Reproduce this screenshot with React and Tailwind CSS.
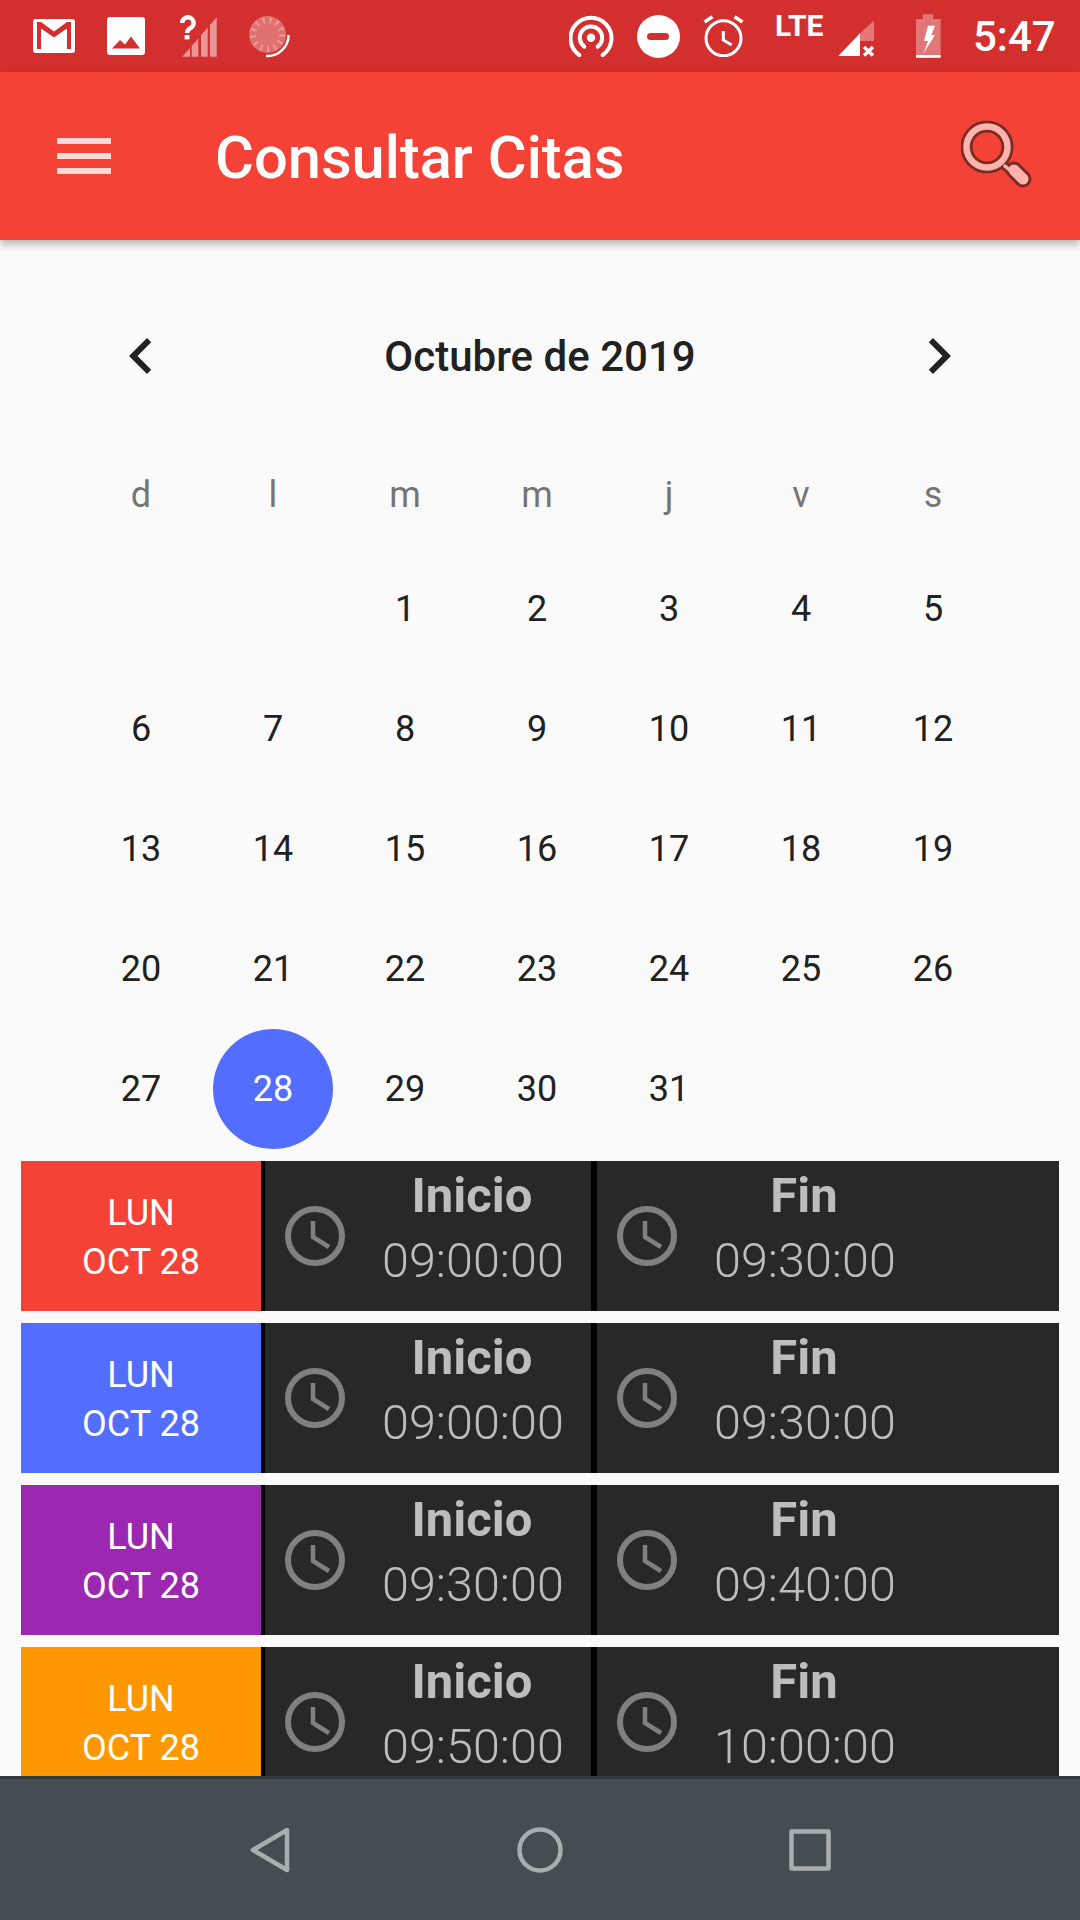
import React from 'react';

const weekDays = ['d', 'l', 'm', 'm', 'j', 'v', 's'];
const days = ['', '', 1, 2, 3, 4, 5, 6, 7, 8, 9, 10, 11, 12, 13, 14, 15, 16, 17, 18, 19, 20, 21, 22, 23, 24, 25, 26, 27, 28, 29, 30, 31];

const citas = [
  { color: 'bg-[#f44336]', inicio: '09:00:00', fin: '09:30:00' },
  { color: 'bg-[#536dfe]', inicio: '09:00:00', fin: '09:30:00' },
  { color: 'bg-[#9c27b0]', inicio: '09:30:00', fin: '09:40:00' },
  { color: 'bg-[#ff9800]', inicio: '09:50:00', fin: '10:00:00' },
];

const StatusLeft = () => (
  <div className="flex items-center pl-[33px]">
    {/* Gmail */}
    <svg width="42" height="34" viewBox="0 0 42 34">
      <rect width="42" height="34" rx="3" fill="#fff" />
      <path d="M4 3H8L21 12.5L34 3H38V30H34V9.5L21 18.5L8 9.5V30H4Z" fill="#d32f2f" />
    </svg>
    {/* Picture */}
    <svg width="38" height="38" viewBox="0 0 38 38" className="ml-[32px]">
      <rect width="38" height="38" rx="3" fill="#fff" />
      <path d="M5 31.5L13 23L18 27.5L24 19.5L33 31.5Z" fill="#d32f2f" />
    </svg>
    {/* No sim signal */}
    <svg width="37" height="42" viewBox="0 0 37 42" className="ml-[35px]">
      <path d="M2.3 41.7L10 32.9V41.7ZM11.7 31L18.3 23.4V41.7H11.7ZM21 20.3L27.7 12.6V41.7H21ZM30 10L36.7 2.3V41.7H30Z" fill="#fff" fillOpacity="0.5" />
      <path d="M2.2 8a5.7 5.7 0 1 1 9 4.6c-2 1.4-4.2 2-4.2 5.4" fill="none" stroke="#fff" strokeWidth="4.4" />
      <rect x="4.6" y="20" width="4.8" height="4.4" fill="#fff" />
    </svg>
    {/* Sync spinner */}
    <svg width="43" height="44" viewBox="0 0 43 44" className="ml-[32px]">
      <circle cx="18.5" cy="20.5" r="18.5" fill="#fff" fillOpacity="0.32" />
      <circle cx="18.5" cy="20.5" r="14.5" fill="none" stroke="#fff" strokeOpacity="0.3" strokeWidth="6" strokeDasharray="2 5" />
      <path d="M39.5 21A21 21 0 0 1 17 42" fill="none" stroke="#fff" strokeWidth="2.5" />
    </svg>
  </div>
);

const StatusRight = () => (
  <div className="flex items-center pr-[28px]">
    {/* Hotspot */}
    <svg width="46" height="44" viewBox="0 0 46 44" fill="none" stroke="#fff" strokeLinecap="round" className="mt-[2px]">
      <path d="M10.3 40A20.5 20.5 0 1 1 33.7 40" strokeWidth="4" />
      <path d="M15.3 31.7A11.2 11.2 0 1 1 28.7 31.7" strokeWidth="4" />
      <circle cx="22" cy="22.7" r="4.2" fill="#fff" stroke="none" />
    </svg>
    {/* Do not disturb */}
    <svg width="43" height="43" viewBox="0 0 43 43" className="ml-[22px]">
      <circle cx="21.5" cy="21.5" r="21.5" fill="#fff" />
      <rect x="10" y="18" width="22" height="7" rx="3.5" fill="#d32f2f" />
    </svg>
    {/* Alarm */}
    <svg width="41" height="42" viewBox="0 0 41 42" fill="none" stroke="#fff" className="ml-[23px]">
      <circle cx="20.5" cy="23.3" r="17.5" strokeWidth="3" />
      <path d="M1.5 7L9.5 1.7M31.5 1.7L39.5 7" strokeWidth="3.5" />
      <path d="M20.3 16V25L28.7 30" strokeWidth="3" />
    </svg>
    <span className="ml-[31px] mb-[21px] w-[48px] text-[30px] leading-[30px] font-bold text-white">LTE</span>
    {/* Signal */}
    <svg width="37" height="37" viewBox="0 0 37 37" className="ml-[15px] mt-[5px]">
      <path d="M22 13.3L36 0.7V21H22Z" fill="#fff" fillOpacity="0.35" />
      <path d="M0.3 36L22 13.3V36Z" fill="#fff" />
      <path d="M26 27L35 35.5M35 27L26 35.5" stroke="#fff" strokeWidth="3.5" />
    </svg>
    {/* Battery */}
    <svg width="25" height="44" viewBox="0 0 25 44" className="ml-[41px]">
      <path d="M6.7 0.3H17.3V5H24.7V41H0V5H6.7Z" fill="#fff" fillOpacity="0.35" />
      <rect y="41" width="24.7" height="2.8" fill="#fff" />
      <path d="M12 11.7H19L15.3 21H19L7.5 39.3L12 27H8Z" fill="#fff" />
    </svg>
    <span className="ml-[32px] mt-[2px] w-[79px] text-[42px] leading-[44px] font-medium text-white">5:47</span>
  </div>
);

const AppBar = () => (
  <header className="relative z-10 flex h-[168px] items-center bg-[#f44336] pl-[48px] pr-[47px] shadow-[0_4px_8px_rgba(0,0,0,0.3)]">
    <svg width="72" height="72" viewBox="0 0 24 24" fill="#ffd9d6">
      <path d="M3 18h18v-2H3v2zm0-5h18v-2H3v2zm0-7v2h18V6H3z" />
    </svg>
    <h1 className="ml-[95px] mt-[3px] flex-1 text-[59.6px] leading-[70px] font-medium text-white">Consultar Citas</h1>
    <svg width="72" height="72" viewBox="0 0 72 72" fill="none" strokeLinecap="round">
      <path d="M44 46L52 53" stroke="#7a2b25" strokeWidth="9" />
      <path d="M53 50L62 59" stroke="#7a2b25" strokeWidth="17" />
      <circle cx="26" cy="27" r="20.5" stroke="#7a2b25" strokeWidth="12" />
      <circle cx="26" cy="27" r="20.5" stroke="#ffb3ad" strokeWidth="6.5" />
      <path d="M44 46L52 53" stroke="#ffb3ad" strokeWidth="3.5" />
      <path d="M53 50L62 59" stroke="#ffb3ad" strokeWidth="11" />
    </svg>
  </header>
);

const Calendar = () => (
  <section className="pt-[80px]">
    <div className="flex h-[72px] items-center justify-between px-[105px]">
      <svg width="72" height="72" viewBox="0 0 24 24" fill="#212121">
        <path d="M15.41 7.41L14 6l-6 6 6 6 1.41-1.41L10.83 12z" />
      </svg>
      <span className="mt-[2px] text-[42px] leading-[50px] font-medium text-[#212121]">Octubre de 2019</span>
      <svg width="72" height="72" viewBox="0 0 24 24" fill="#212121">
        <path d="M10 6L8.59 7.41 13.17 12l-4.58 4.59L10 18l6-6z" />
      </svg>
    </div>

    <div className="mt-[67px] grid h-[72px] grid-cols-7 items-center pl-[75px] pr-[81px]">
      {weekDays.map((d, i) => (
        <span key={i} className="text-center text-[36px] leading-[44px] text-[#757575]">{d}</span>
      ))}
    </div>

    <div className="mt-[18px] grid grid-cols-7 auto-rows-[120px] pl-[75px] pr-[81px]">
      {days.map((d, i) => (
        <div key={i} className="flex items-center justify-center">
          <span
            className={
              d === 28
                ? 'flex h-[120px] w-[120px] items-center justify-center rounded-full bg-[#536dfe] text-[36px] text-white'
                : 'text-[36px] text-[#212121]'
            }
          >
            {d}
          </span>
        </div>
      ))}
    </div>
  </section>
);

const Clock = () => (
  <svg width="60" height="60" viewBox="0 0 60 60" fill="none" stroke="#808080" className="shrink-0">
    <circle cx="30" cy="30" r="27" strokeWidth="6" />
    <path d="M28 15V31L44 41" strokeWidth="4.5" />
  </svg>
);

const TimeCell = ({ label, time, className }) => (
  <div className={`flex items-center bg-[#282828] pl-[20px] ${className}`}>
    <Clock />
    <div className="ml-[37px] mb-[17px] w-[180px] text-center text-[#bdbdbd]">
      <p className="text-[49px] leading-[65px] font-bold">{label}</p>
      <p className="pr-[4px] text-[48.5px] leading-[65px] font-light whitespace-nowrap">{time}</p>
    </div>
  </div>
);

const CitaRow = ({ color, inicio, fin }) => (
  <div className="flex h-[150px] shrink-0">
    <div className={`flex w-[240px] flex-col items-center justify-center pt-[4px] text-[36px] leading-[49px] text-white ${color}`}>
      <span>LUN</span>
      <span>OCT 28</span>
    </div>
    <div className="w-[4px] bg-black" />
    <TimeCell label="Inicio" time={inicio} className="w-[326px]" />
    <div className="w-[6px] bg-black" />
    <TimeCell label="Fin" time={fin} className="flex-1" />
  </div>
);

const NavBar = () => (
  <nav className="grid h-[144px] shrink-0 grid-cols-3 items-center border-t-[3px] border-[#333a3e] bg-[#454c52] px-[135px]">
    <svg width="40" height="46" viewBox="0 0 40 46" fill="none" stroke="#a8adb0" strokeWidth="4.5" strokeLinejoin="round" className="justify-self-center">
      <path d="M37 3V43L3 23Z" />
    </svg>
    <svg width="46" height="46" viewBox="0 0 46 46" fill="none" stroke="#a8adb0" strokeWidth="4.5" className="justify-self-center">
      <circle cx="23" cy="23" r="20.5" />
    </svg>
    <svg width="42" height="42" viewBox="0 0 42 42" fill="none" stroke="#a8adb0" strokeWidth="4.5" strokeLinejoin="round" className="justify-self-center">
      <rect x="2.5" y="2.5" width="37" height="37" />
    </svg>
  </nav>
);

const App = () => {
  return (
    <div className="flex h-[1920px] w-[1080px] flex-col overflow-hidden bg-[#fafafa] font-['Roboto',sans-serif]">
      {/* Status bar */}
      <div className="flex h-[72px] shrink-0 items-center justify-between bg-[#d32f2f]">
        <StatusLeft />
        <StatusRight />
      </div>

      <AppBar />

      <main className="min-h-0 flex-1 overflow-hidden">
        <Calendar />

        {/* Citas */}
        <div className="mt-[12px] flex flex-col gap-[12px] px-[21px]">
          {citas.map((c, i) => (
            <CitaRow key={i} {...c} />
          ))}
        </div>
      </main>

      <NavBar />
    </div>
  );
};

export default App;
